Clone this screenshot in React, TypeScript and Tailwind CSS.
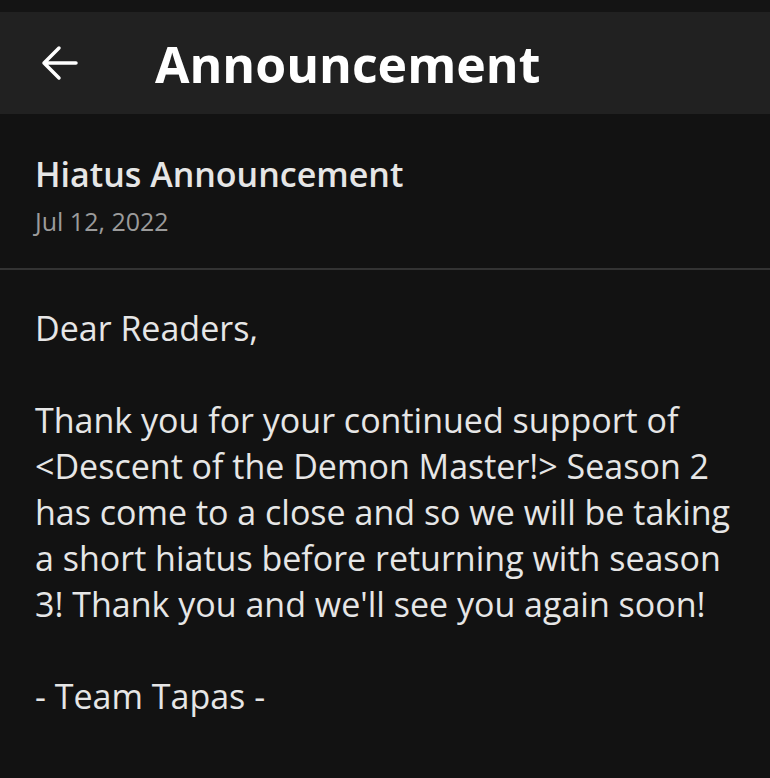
const font = { fontFamily: '"Open Sans", sans-serif' };

function BackArrow() {
  return (
    <svg width="44" height="44" viewBox="0 0 44 44" fill="none">
      <path
        d="M6 22H38M21 7L6 22L21 37"
        stroke="white"
        strokeWidth="3.5"
        strokeLinecap="round"
        strokeLinejoin="round"
      />
    </svg>
  );
}

export default function App() {
  return (
    <div className="min-h-[778px] w-[770px] bg-[#121212]" style={font}>
      <div className="h-[12px] bg-[#141414]" />
      <header className="flex h-[102px] items-center bg-[#212121]">
        <button className="ml-[38px] flex h-[44px] w-[44px] items-center justify-center">
          <BackArrow />
        </button>
        <h1 className="ml-[73px] mt-[2px] text-[50px] font-bold leading-none text-white">
          Announcement
        </h1>
      </header>

      <section className="border-b-2 border-[#333333] px-[35px] pb-[31px] pt-[38px]">
        <h2 className="text-[34px] font-semibold leading-[44px] text-[#e6e6e6]">
          Hiatus Announcement
        </h2>
        <p className="mt-[9px] text-[25px] leading-[32px] text-[#9b9b9b]">
          Jul 12, 2022
        </p>
      </section>

      <article className="px-[35px] pt-[35px] text-[34px] leading-[46px] text-[#e6e6e6]">
        <p>Dear Readers,</p>
        <p className="mt-[46px]">
          Thank you for your continued support of &lt;Descent of the Demon
          Master!&gt; Season 2 has come to a close and so we will be taking a
          short hiatus before returning with season 3! Thank you and we'll see
          you again soon!
        </p>
        <p className="mt-[46px]">- Team Tapas -</p>
      </article>
    </div>
  );
}
